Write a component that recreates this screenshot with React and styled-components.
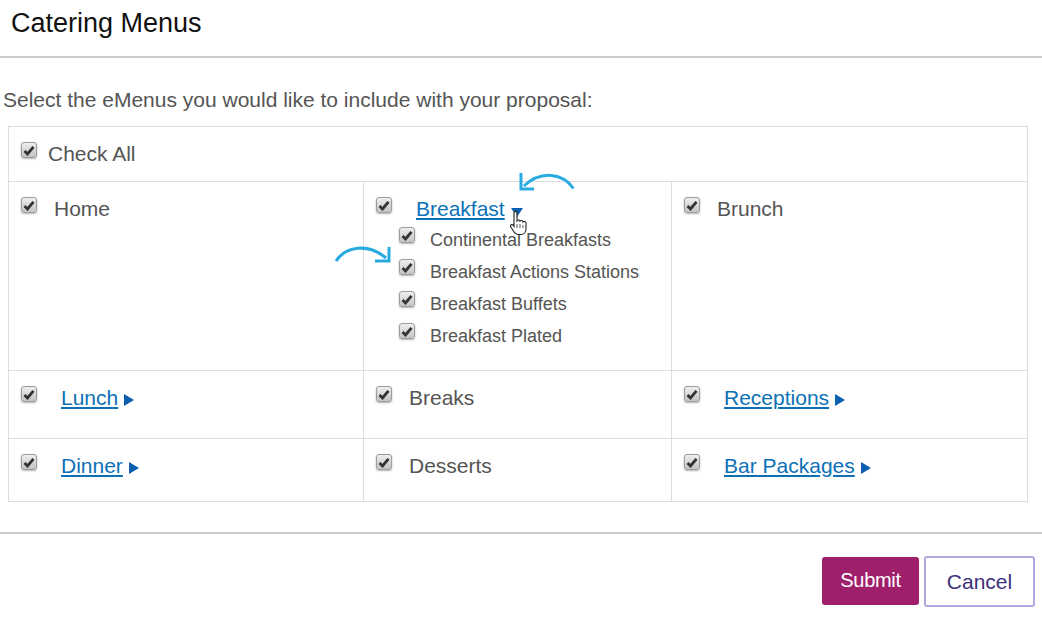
import React from "react";
import styled, { createGlobalStyle } from "styled-components";

const Global = createGlobalStyle`
  html, body {
    margin: 0;
    padding: 0;
    background: #fff;
    font-family: "Liberation Sans", Arial, sans-serif;
  }
`;

const Page = styled.div`
  position: relative;
  width: 1042px;
  height: 621px;
  overflow: hidden;
  display: flex;
  flex-direction: column;
`;

const Header = styled.div`
  height: 58px;
  box-sizing: border-box;
  padding: 9px 0 0 11px;
  border-bottom: 2px solid #ccc;
`;

const Title = styled.h2`
  margin: 0;
  font-size: 27px;
  line-height: 28px;
  font-weight: 400;
  color: #111;
`;

const Intro = styled.p`
  margin: 32px 0 0 3px;
  height: 20px;
  font-size: 21px;
  line-height: 20px;
  color: #555;
  white-space: nowrap;
`;

const Table = styled.div`
  margin: 16px 0 0 8px;
  width: 1020px;
  box-sizing: border-box;
  border: 1px solid #ddd;
  display: grid;
  grid-template-columns: 354px 308px 1fr;
  grid-template-rows: 54px 189px 68px 63px;
`;

const Cell = styled.div`
  box-sizing: border-box;
  padding: 15px 0 0 12px;
  border-top: ${(p) => (p.$first ? "none" : "1px solid #ddd")};
  border-left: ${(p) => (p.$left ? "1px solid #ddd" : "none")};
  grid-column: ${(p) => (p.$wide ? "1 / -1" : "auto")};
`;

const Row = styled.div`
  display: flex;
  align-items: flex-start;
  font-size: 21px;
  line-height: 24px;
  color: #555;
`;

const Box = styled.span`
  flex: none;
  width: 16px;
  height: 16px;
  box-sizing: border-box;
  border: 1px solid #9c9c9c;
  border-radius: 3px;
  background: linear-gradient(#eeeeee, #c4c4c4);
  box-shadow: 0 1px 2px rgba(0, 0, 0, 0.3);
  display: flex;
  align-items: center;
  justify-content: center;
`;

const Label = styled.span`
  margin-left: ${(p) => p.$gap}px;
  white-space: nowrap;
`;

const MenuLink = styled.a`
  color: #0c71b7;
  text-decoration: underline;
  text-underline-offset: 2px;
  cursor: pointer;
`;

const Arrow = styled.span`
  display: inline-block;
  margin-left: 6px;
  width: 0;
  height: 0;
  border-style: solid;
  border-color: transparent transparent transparent #0c5fb0;
  border-width: 6px 0 6px 10px;
  vertical-align: -1px;
`;

const ArrowDown = styled.span`
  display: inline-block;
  margin-left: 6px;
  width: 0;
  height: 0;
  border-style: solid;
  border-color: #0c5fb0 transparent transparent transparent;
  border-width: 9px 6px 0 6px;
  vertical-align: -1px;
`;

const SubList = styled.div`
  margin: 6px 0 0 23px;
  display: flex;
  flex-direction: column;
`;

const SubRow = styled.div`
  height: 32px;
  display: flex;
  align-items: flex-start;
  font-size: 18px;
  line-height: 26px;
  color: #555;
`;

const Footer = styled.div`
  margin-top: 30px;
  border-top: 2px solid #ccc;
  padding: 22px 7px 0 0;
  display: flex;
  justify-content: flex-end;
  align-items: center;
  gap: 5px;
`;

const Submit = styled.button`
  width: 97px;
  height: 48px;
  margin-bottom: 2px;
  border: none;
  border-radius: 3px;
  background: #a01f6b;
  color: #fff;
  font: 400 20px "Liberation Sans", Arial, sans-serif;
  letter-spacing: -0.3px;
`;

const Cancel = styled.button`
  width: 111px;
  height: 51px;
  box-sizing: border-box;
  border: 2px solid #b0a6e2;
  border-radius: 3px;
  background: #fff;
  color: #3d2f7c;
  font: 400 21px "Liberation Sans", Arial, sans-serif;
`;

const Overlay = styled.svg`
  position: absolute;
  left: ${(p) => p.$x}px;
  top: ${(p) => p.$y}px;
  pointer-events: none;
`;

function Check() {
  return (
    <Box>
      <svg width="12" height="11" viewBox="0 0 12 11">
        <path d="M1.5 6 L4.5 9 L10.5 1.8" fill="none" stroke="#333" strokeWidth="2.8" />
      </svg>
    </Box>
  );
}

function Item({ label, gap, link, more }) {
  return (
    <Row>
      <Check />
      <Label $gap={gap}>
        {link ? <MenuLink>{label}</MenuLink> : label}
        {more === "right" && <Arrow />}
        {more === "down" && <ArrowDown />}
      </Label>
    </Row>
  );
}

const subItems = [
  "Continental Breakfasts",
  "Breakfast Actions Stations",
  "Breakfast Buffets",
  "Breakfast Plated",
];

export default function App() {
  return (
    <Page>
      <Global />
      <Header>
        <Title>Catering Menus</Title>
      </Header>
      <Intro>Select the eMenus you would like to include with your proposal:</Intro>
      <Table>
        <Cell $first $wide>
          <Item label="Check All" gap={11} />
        </Cell>

        <Cell>
          <Item label="Home" gap={17} />
        </Cell>
        <Cell $left>
          <Item label="Breakfast" gap={24} link more="down" />
          <SubList>
            {subItems.map((s) => (
              <SubRow key={s}>
                <Check />
                <Label $gap={15}>{s}</Label>
              </SubRow>
            ))}
          </SubList>
        </Cell>
        <Cell $left>
          <Item label="Brunch" gap={17} />
        </Cell>

        <Cell>
          <Item label="Lunch" gap={24} link more="right" />
        </Cell>
        <Cell $left>
          <Item label="Breaks" gap={17} />
        </Cell>
        <Cell $left>
          <Item label="Receptions" gap={24} link more="right" />
        </Cell>

        <Cell>
          <Item label="Dinner" gap={24} link more="right" />
        </Cell>
        <Cell $left>
          <Item label="Desserts" gap={17} />
        </Cell>
        <Cell $left>
          <Item label="Bar Packages" gap={24} link more="right" />
        </Cell>
      </Table>
      <Footer>
        <Submit>Submit</Submit>
        <Cancel>Cancel</Cancel>
      </Footer>

      {/* annotation arrows and hand cursor sit over the table */}
      <Overlay $x={516} $y={168} width="64" height="26" viewBox="0 0 64 26">
        <path d="M57.5 20.5 C47 5 25 2 8 18" fill="none" stroke="#29abe2" strokeWidth="3" />
        <path d="M5 5 L5 21 L18 21" fill="none" stroke="#29abe2" strokeWidth="3" />
      </Overlay>
      <Overlay $x={332} $y={240} width="64" height="28" viewBox="0 0 64 28">
        <path d="M4 21 C14 6 36 3 54 18" fill="none" stroke="#29abe2" strokeWidth="3" />
        <path d="M57 7 L57 21 L43 21" fill="none" stroke="#29abe2" strokeWidth="3" />
      </Overlay>
      <Overlay $x={509} $y={210} width="22" height="26" viewBox="0 0 22 26">
        <path
          d="M5 2.5 C5 1 8 1 8 2.5 L8 11 C9 9.5 11 10 11 11 C12 10 14 10.5 14 12 C15 11 17 11.5 17 13 L17 19 C17 22 15 24.5 12 24.5 L9 24.5 C7 24.5 6 23 5 22 L1.5 16.5 C1 15 3 14 4 15 L5 16.5 Z"
          fill="#fff"
          stroke="#222"
          strokeWidth="1.1"
        />
        <path d="M8 14 V18 M11 14 V18 M14 15 V18" stroke="#222" strokeWidth="0.8" />
      </Overlay>
    </Page>
  );
}
